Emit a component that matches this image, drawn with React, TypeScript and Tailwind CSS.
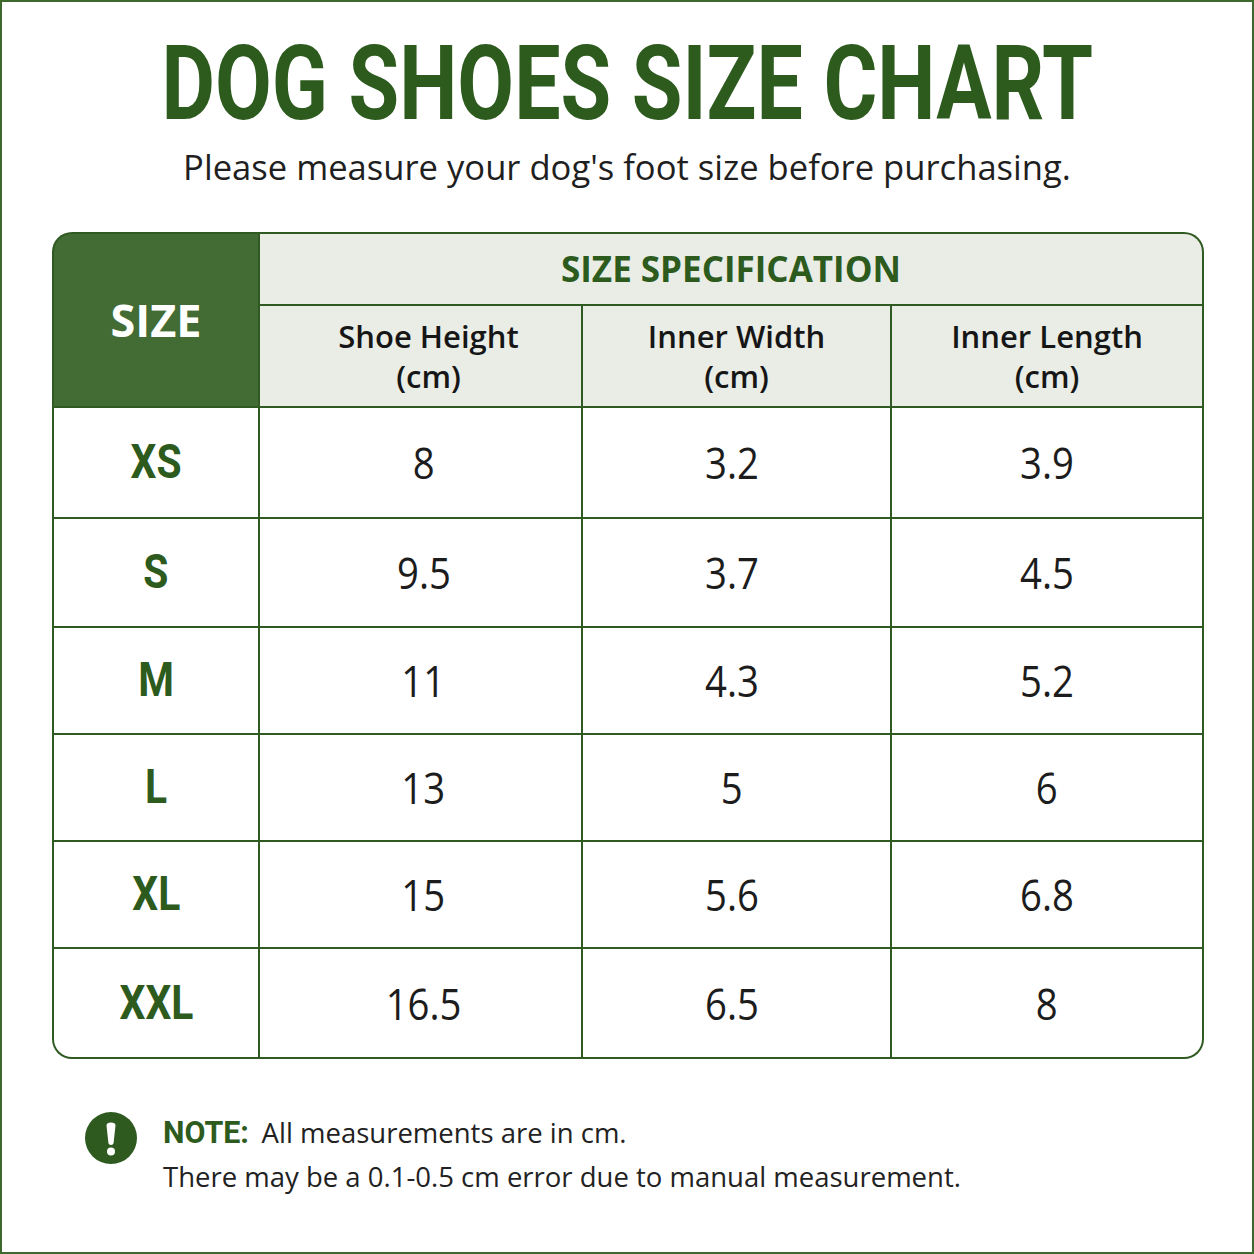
import React from 'react'

const rows = [
  { size: 'XS', height: '8', width: '3.2', length: '3.9' },
  { size: 'S', height: '9.5', width: '3.7', length: '4.5' },
  { size: 'M', height: '11', width: '4.3', length: '5.2' },
  { size: 'L', height: '13', width: '5', length: '6' },
  { size: 'XL', height: '15', width: '5.6', length: '6.8' },
  { size: 'XXL', height: '16.5', width: '6.5', length: '8' },
]

const sans = "font-['Open_Sans','Noto_Sans',sans-serif]"
const cond = "font-['Roboto','Liberation_Sans',sans-serif]"

function ValueCell({ value, className = '' }: { value: string; className?: string }) {
  return (
    <div className={`flex items-center justify-center bg-white ${className}`}>
      <span className={`${sans} inline-block scale-x-[0.87] text-[44px] leading-none text-[#1c1c1c]`}>{value}</span>
    </div>
  )
}

function HeaderCell({ title, className = '' }: { title: string; className?: string }) {
  return (
    <div className={`flex items-center justify-center bg-[#e9ede6] ${className}`}>
      <div className={`${sans} text-center text-[31px] font-semibold leading-[40px] text-[#161616]`}>
        <div>{title}</div>
        <div>(cm)</div>
      </div>
    </div>
  )
}

function NoteIcon() {
  return (
    <svg width="52" height="52" viewBox="0 0 52 52" className="mt-[2px] shrink-0">
      <circle cx="26" cy="26" r="26" fill="#2e5a1f" />
      <path d="M21.5 13.5 Q21.5 10.5 26 10.5 Q30.5 10.5 30.5 13.5 L28.6 31 Q28.3 33 26 33 Q23.7 33 23.4 31 Z" fill="#ffffff" />
      <circle cx="26" cy="39.5" r="4" fill="#ffffff" />
    </svg>
  )
}

export default function App() {
  return (
    <div className="h-[1254px] w-[1254px] border-2 border-[#3d6a2c] bg-white">
      <div className="flex flex-col items-center pt-[30px]">
        <h1 className={`${cond} inline-block scale-x-[0.8] whitespace-nowrap text-[103px] font-bold leading-none text-[#2d5b1e]`}>
          DOG SHOES SIZE CHART
        </h1>
        <p className={`${sans} mt-[15px] text-[34.6px] leading-none text-[#1f1f1f]`}>
          Please measure your dog's foot size before purchasing.
        </p>
      </div>

      <div className="ml-[50px] mt-[47px] grid w-[1152px] grid-cols-[204px_321px_307px_310px] grid-rows-[70px_100px_109px_107px_105px_105px_105px_108px] gap-[2px] overflow-hidden rounded-[20px] bg-[#2f5a22] p-[2px]">
        <div className="row-span-2 flex items-center justify-center rounded-tl-[18px] bg-[#436b34]">
          <span className={`${sans} text-[45px] font-bold leading-none text-white`}>SIZE</span>
        </div>
        <div className="col-span-3 flex items-center justify-center rounded-tr-[18px] bg-[#e9ede6]">
          <span className={`${sans} text-[35px] font-bold leading-none text-[#2d5b1e]`}>SIZE SPECIFICATION</span>
        </div>
        <HeaderCell title="Shoe Height" className="pl-[16px]" />
        <HeaderCell title="Inner Width" />
        <HeaderCell title="Inner Length" />

        {rows.map((row, i) => {
          const last = i === rows.length - 1
          return (
            <React.Fragment key={row.size}>
              <div className={`flex items-center justify-center bg-white ${last ? 'rounded-bl-[18px]' : ''}`}>
                <span className={`${cond} inline-block scale-x-[0.85] text-[48px] font-bold leading-none text-[#2d5b1e]`}>
                  {row.size}
                </span>
              </div>
              <ValueCell value={row.height} className="pl-[6px]" />
              <ValueCell value={row.width} className="pr-[10px]" />
              <ValueCell value={row.length} className={last ? 'rounded-br-[18px]' : ''} />
            </React.Fragment>
          )
        })}
      </div>

      <div className="ml-[83px] mt-[51px] flex items-start gap-[26px]">
        <NoteIcon />
        <div className={`${sans} text-[27.5px] leading-[44px] text-[#222222]`}>
          <div>
            <span className={`${cond} inline-block origin-left scale-x-[0.95] text-[32px] font-bold text-[#2d5b1e]`}>NOTE:</span>
            <span className="ml-[1px]"> All measurements are in cm.</span>
          </div>
          <div>There may be a 0.1-0.5 cm error due to manual measurement.</div>
        </div>
      </div>
    </div>
  )
}
